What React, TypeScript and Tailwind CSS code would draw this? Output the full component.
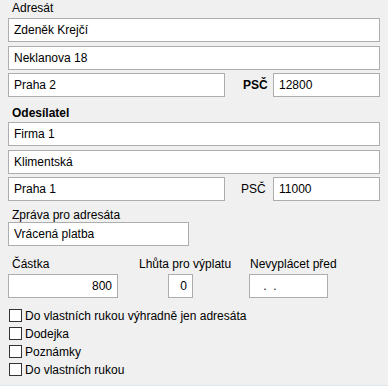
import React from 'react';

const field =
  "h-6 border border-[#adadad] bg-white px-[5px] text-[12px] leading-[14px] text-black outline-none font-['Liberation_Sans',Arial,sans-serif]";

function Field({ value, className = '', right = false }: { value: string; className?: string; right?: boolean }) {
  return (
    <input
      readOnly
      value={value}
      className={`${field} ${right ? 'text-right' : ''} ${className}`}
    />
  );
}

function Check({ label }: { label: string }) {
  return (
    <label className="flex h-[18px] items-start gap-[3px]">
      <span className="ml-[1px] block h-[13px] w-[13px] border border-[#333333] bg-white" />
      <span className="leading-[14px]">{label}</span>
    </label>
  );
}

export default function App() {
  return (
    <div className="flex h-[386px] w-[388px] flex-col border-b border-[#dfe6ef] bg-[#f0f0f0] px-2 text-[12px] leading-[14px] text-black font-['Liberation_Sans',Arial,sans-serif]">
      {/* Adresát */}
      <div className="h-[18px] pl-1 pt-[1px]">Adresát</div>
      <Field value="Zdeněk Krejčí" className="w-full" />
      <Field value="Neklanova 18" className="mt-1 w-full" />
      <div className="mt-[3px] flex items-center">
        <Field value="Praha 2" className="w-[217px]" />
        <span className="ml-[18px] font-bold">PSČ</span>
        <Field value="12800" className="ml-auto w-[107px]" />
      </div>

      {/* Odesílatel */}
      <div className="h-[25px] pl-1 pt-[9px] font-bold">Odesílatel</div>
      <Field value="Firma 1" className="w-full" />
      <Field value="Klimentská" className="mt-1 w-full" />
      <div className="mt-[3px] flex items-center">
        <Field value="Praha 1" className="w-[217px]" />
        <span className="ml-[16px]">PSČ</span>
        <Field value="11000" className="ml-auto w-[107px]" />
      </div>

      {/* Zpráva */}
      <div className="h-[21px] pl-1 pt-[7px]">Zpráva pro adresáta</div>
      <Field value="Vrácená platba" className="w-[181px]" />

      {/* Částka / Lhůta / Nevyplácet */}
      <div className="flex h-[28px] pt-[11px]">
        <span className="w-[131px] pl-1">Částka</span>
        <span className="w-[111px]">Lhůta pro výplatu</span>
        <span>Nevyplácet před</span>
      </div>
      <div className="flex">
        <Field value="800" right className="w-[110px]" />
        <Field value="0" right className="ml-[50px] w-[25px]" />
        <Field value=" .  ." className="ml-[56px] w-[79px] pl-[10px]" />
      </div>

      {/* Volby */}
      <div className="mt-[11px] flex flex-col">
        <Check label="Do vlastních rukou výhradně jen adresáta" />
        <Check label="Dodejka" />
        <Check label="Poznámky" />
        <Check label="Do vlastních rukou" />
      </div>
    </div>
  );
}
